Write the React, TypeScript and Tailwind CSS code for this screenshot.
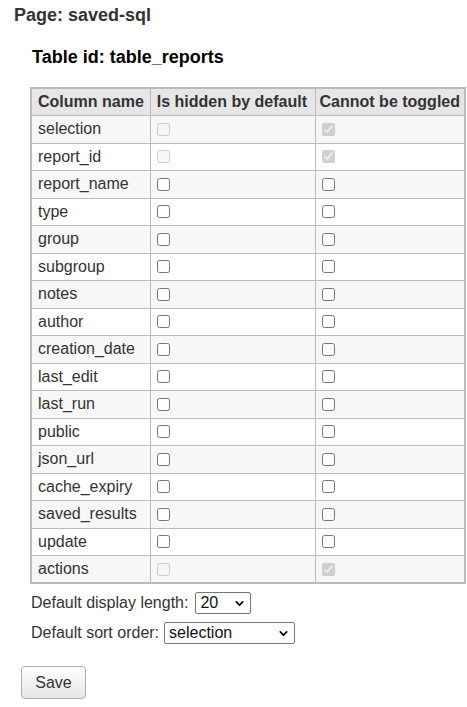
import { ChevronDown } from "lucide-react";

type Col = { name: string; hidden: boolean; locked: boolean; disabled: boolean };

const cols: Col[] = [
  { name: "selection", hidden: false, locked: true, disabled: true },
  { name: "report_id", hidden: false, locked: true, disabled: true },
  { name: "report_name", hidden: false, locked: false, disabled: false },
  { name: "type", hidden: false, locked: false, disabled: false },
  { name: "group", hidden: false, locked: false, disabled: false },
  { name: "subgroup", hidden: false, locked: false, disabled: false },
  { name: "notes", hidden: false, locked: false, disabled: false },
  { name: "author", hidden: false, locked: false, disabled: false },
  { name: "creation_date", hidden: false, locked: false, disabled: false },
  { name: "last_edit", hidden: false, locked: false, disabled: false },
  { name: "last_run", hidden: false, locked: false, disabled: false },
  { name: "public", hidden: false, locked: false, disabled: false },
  { name: "json_url", hidden: false, locked: false, disabled: false },
  { name: "cache_expiry", hidden: false, locked: false, disabled: false },
  { name: "saved_results", hidden: false, locked: false, disabled: false },
  { name: "update", hidden: false, locked: false, disabled: false },
  { name: "actions", hidden: false, locked: true, disabled: true },
];

const Select = ({ value, options, width }: { value: string; options: string[]; width: string }) => (
  <span className={`relative inline-block ${width}`}>
    <select
      defaultValue={value}
      className="block w-full h-[22px] appearance-none border border-[#767676] rounded-[2px] bg-white pl-[4px] pr-[20px] text-[16px] leading-[20px] font-normal text-[#111]"
    >
      {options.map((o) => (
        <option key={o}>{o}</option>
      ))}
    </select>
    {/* dropdown arrow */}
    <ChevronDown className="absolute right-[5px] top-[5px] w-[13px] h-[13px] pointer-events-none text-black" strokeWidth={3} />
  </span>
);

export default function App() {
  return (
    <div className="min-h-screen bg-white text-[#333] text-[16px] pt-[4px]" style={{ fontFamily: '"Liberation Sans", Arial, sans-serif' }}>
      <h2 className="pl-[14px] text-[18px] leading-[22px] font-bold text-[#333]">Page: saved-sql</h2>

      <div className="pl-[30px] pt-[20px]">
        <h3 className="pl-[2px] text-[18px] leading-[22px] font-bold text-black">Table id: table_reports</h3>

        <table className="mt-[19px] w-[436px] border-collapse border-2 border-[#bbb] text-left">
          <thead>
            <tr className="bg-[#e6e6e6]">
              <th className="h-[27.5px] w-[118px] border border-[#bbb] px-[6px] font-bold whitespace-nowrap">Column name</th>
              <th className="h-[27.5px] w-[165px] border border-[#bbb] px-[6px] font-bold whitespace-nowrap">Is hidden by default</th>
              <th className="h-[27.5px] border border-[#bbb] px-[4px] font-bold whitespace-nowrap">Cannot be toggled</th>
            </tr>
          </thead>
          <tbody>
            {cols.map((c, i) => (
              <tr key={c.name} className={i % 2 === 0 ? "bg-[#f7f7f7]" : "bg-white"}>
                <td className="h-[27.5px] border border-[#bbb] px-[6px] py-0 leading-[18px]">{c.name}</td>
                <td className="h-[27.5px] border border-[#bbb] px-[6px] py-0">
                  <input type="checkbox" defaultChecked={c.hidden} disabled={c.disabled} className="block w-[13px] h-[13px] m-0" />
                </td>
                <td className="h-[27.5px] border border-[#bbb] px-[6px] py-0">
                  <input type="checkbox" defaultChecked={c.locked} disabled={c.disabled} className="block w-[13px] h-[13px] m-0" />
                </td>
              </tr>
            ))}
          </tbody>
        </table>

        <div className="flex flex-col gap-[8px] pt-[8px] pl-[1px]">
          <label className="flex items-center gap-[7px] h-[22px]">
            <span>Default display length:</span>
            <Select value="20" options={["10", "20", "50", "100"]} width="w-[56px]" />
          </label>
          <label className="flex items-center gap-[5px] h-[22px]">
            <span>Default sort order:</span>
            <Select value="selection" options={cols.map((c) => c.name)} width="w-[131px]" />
          </label>
        </div>
      </div>

      <div className="pl-[21px] pt-[22px]">
        <button className="w-[65px] h-[33px] border border-[#adadad] rounded-[4px] bg-gradient-to-b from-white to-[#e6e6e6] text-[16px] text-[#333]">
          Save
        </button>
      </div>
    </div>
  );
}
